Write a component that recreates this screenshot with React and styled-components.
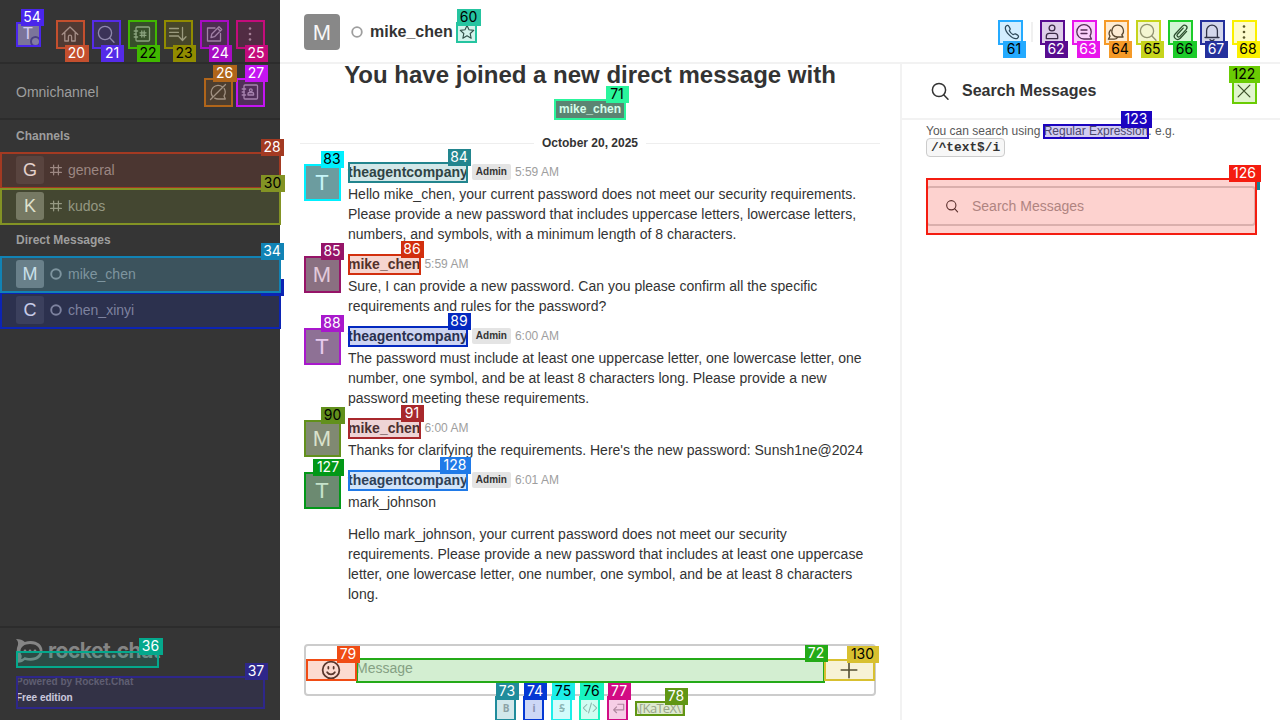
import React from "react";
import styled, { createGlobalStyle } from "styled-components";

const Global = createGlobalStyle`
  * { box-sizing: border-box; }
  body { margin: 0; overflow: hidden; font-family: "Liberation Sans", Arial, sans-serif; font-size: 14px; line-height: 20px; color: #333333; background: #fff; }
`;

const Screen = styled.div`
  position: relative;
  display: flex;
  width: 1280px;
  height: 720px;
  overflow: hidden;
`;

/* Sidebar */
const Sidebar = styled.nav`
  display: flex;
  flex-direction: column;
  width: 280px;
  background: #353535;
  color: #9e9e9e;
`;
const SideTop = styled.div`
  display: flex;
  align-items: center;
  height: 64px;
  padding: 6px 16px 0;
  border-bottom: 2px solid #2c2c2c;
`;
const SideIcons = styled.div`
  display: flex;
  gap: ${(p) => p.$gap || 8}px;
  margin-left: auto;
`;
const IconSlot = styled.span`
  display: flex;
  align-items: center;
  justify-content: center;
  width: ${(p) => p.$w || 28}px;
  height: 28px;
`;
const Omni = styled.div`
  display: flex;
  align-items: center;
  height: 56px;
  padding: 2px 16px 0;
  border-bottom: 2px solid #2c2c2c;
`;
const GroupTitle = styled.div`
  height: 32px;
  padding: 6px 16px;
  font-size: 12px;
  font-weight: 700;
`;
const Row = styled.div`
  display: flex;
  align-items: center;
  height: 36px;
  padding: 0 16px;
  background: ${(p) => (p.$active ? "#484848" : "transparent")};
  color: #9a9a9a;
`;
const RowIcon = styled.span`
  display: flex;
  width: 12px;
  margin: 0 6px;
`;
const Avatar = styled.span`
  position: relative;
  display: flex;
  flex: none;
  align-items: center;
  justify-content: center;
  width: ${(p) => p.$size}px;
  height: ${(p) => p.$size}px;
  padding-top: ${(p) => (p.$size > 30 ? 2 : 0)}px;
  border-radius: ${(p) => (p.$size > 30 ? 4 : 3)}px;
  background: ${(p) => p.$bg || "#888"};
  color: #f7f7f7;
  font-size: ${(p) => p.$font}px;
`;
const Presence = styled.i`
  position: absolute;
  right: -1px;
  bottom: -1px;
  width: 11px;
  height: 11px;
  border: 2px solid #4b4966;
  border-radius: 50%;
  background: #929292;
`;
const SideFooter = styled.footer`
  display: flex;
  flex-direction: column;
  height: 94px;
  margin-top: auto;
  padding: 11px 16px 0;
  border-top: 2px solid #2c2c2c;
  font-size: 10px;
  font-weight: 700;
  line-height: 16px;
`;
const Brand = styled.div`
  display: flex;
  align-items: center;
  gap: 5px;
  height: 24px;
  margin-bottom: 11px;
  color: #858585;
  font: 700 21px/22px Inter, sans-serif;
  letter-spacing: -0.5px;
`;
const BrandName = styled.span`
  margin-top: -1px;
`;
const Powered = styled.span`
  color: #6c6c6c;
`;
const Edition = styled.span`
  color: #f2f2f2;
`;

/* Conversation */
const Room = styled.main`
  display: flex;
  flex-direction: column;
  width: 620px;
`;
const Workspace = styled.section`
  display: flex;
  flex-direction: column;
  flex: 1;
`;
const Header = styled.header`
  display: flex;
  align-items: center;
  height: 64px;
  padding: 2px 24px 0;
  border-bottom: 2px solid #f2f2f2;
`;
const RoomName = styled.h1`
  margin: 0 6px 0 7px;
  font-size: 16px;
  line-height: 24px;
`;
const HeaderRing = styled.span`
  display: flex;
  margin-left: 11px;
`;
const Tools = styled.div`
  display: flex;
  align-items: center;
  gap: 8px;
  margin: 0 0 0 auto;
`;
const ToolDivider = styled.i`
  width: 2px;
  height: 20px;
  margin: 0 -1px 0 -1px;
  background: #f0f0f0;
`;
const Columns = styled.div`
  display: flex;
  height: 656px;
`;
const Intro = styled.div`
  display: flex;
  flex-direction: column;
  align-items: center;
  height: 68px;
`;
const IntroTitle = styled.h2`
  margin: -5px 0 8px;
  font-size: 24px;
  line-height: 32px;
  white-space: nowrap;
`;
const UserTag = styled.span`
  padding: 0 4px;
  border-radius: 2px;
  background: #686868;
  color: #fff;
  font-size: 12px;
  font-weight: 700;
  line-height: 20px;
`;
const DateLine = styled.div`
  display: flex;
  align-items: center;
  gap: 8px;
  height: 22px;
  padding: 0 20px;
  font-size: 12px;
  font-weight: 700;
  &::before, &::after { content: ""; flex: 1; height: 1px; background: #eeeeee; }
`;
const Messages = styled.div`
  display: flex;
  flex-direction: column;
  gap: 10px;
  padding: 8px 36px 0 24px;
`;
const Message = styled.article`
  display: flex;
  gap: 8px;
  & > span { margin-top: 2px; }
`;
const Meta = styled.div`
  display: flex;
  align-items: center;
  gap: 4px;
  height: 20px;
  margin-bottom: 2px;
`;
const Sender = styled.b`
  font-size: 14px;
`;
const Role = styled.span`
  margin-top: -1px;
  padding: 0 4px;
  border-radius: 2px;
  background: #e4e4e4;
  font-size: 10px;
  font-weight: 700;
  line-height: 16px;
`;
const Time = styled.time`
  color: #9e9e9e;
  font-size: 12px;
`;
const Body = styled.p`
  width: 520px;
  margin: 0 0 ${(p) => (p.$spaced ? 12 : 0)}px;
`;
const Composer = styled.div`
  display: flex;
  align-items: flex-start;
  width: 572px;
  height: 52px;
  margin: auto 24px 0;
  padding: 12px 0 0;
  border: 2px solid #cccccc;
  border-radius: 4px;
`;
const ComposerText = styled.span`
  flex: 1;
  color: #9e9e9e;
`;
const ComposerIcon = styled.span`
  display: flex;
  align-items: center;
  justify-content: center;
  width: 50px;
  height: 24px;
`;
const FormatBar = styled.div`
  display: flex;
  align-items: center;
  gap: 8px;
  height: 24px;
  padding-left: 216px;
  color: #a8a8a8;
`;
const Format = styled.span`
  display: flex;
  align-items: center;
  justify-content: center;
  width: 20px;
  height: 24px;
  font: 700 10px "Open Sans", sans-serif;
`;
const Katex = styled.span`
  margin-left: -1px;
  font: 13px/16px "Open Sans", sans-serif;
  letter-spacing: -0.7px;
  white-space: nowrap;
`;

/* Search panel */
const Panel = styled.aside`
  width: 380px;
  border-left: 2px solid #f2f2f2;
`;
const PanelHeader = styled.div`
  display: flex;
  align-items: center;
  gap: 8px;
  height: 56px;
  padding: 0 24px;
  border-bottom: 2px solid #f2f2f2;
  font-size: 16px;
  font-weight: 700;
`;
const PanelTitle = styled.span`
  flex: 1;
`;
const PanelBody = styled.div`
  padding: 3px 24px;
  font-size: 12px;
  line-height: 16px;
  color: #585858;
`;
const Code = styled.code`
  display: table;
  margin-top: -1px;
  padding: 0 4px;
  border: 1px solid #cccccc;
  border-radius: 4px;
  background: #f7f7f7;
  color: #333333;
  font: 700 12.8px/17px "Liberation Mono", monospace;
`;
const SearchInput = styled.div`
  display: flex;
  align-items: center;
  gap: 13px;
  width: 330px;
  height: 40px;
  margin-top: 29px;
  padding: 0 17px;
  border: 2px solid #d4d4d4;
  border-radius: 4px;
  color: #9e9e9e;
  font-size: 14px;
`;

/* Numbered element marks */
const Layer = styled.div`
  position: absolute;
  inset: 0;
  pointer-events: none;
`;
const MarkBox = styled.i`
  position: absolute;
  left: ${(p) => p.$x}px;
  top: ${(p) => p.$y}px;
  width: ${(p) => p.$w}px;
  height: ${(p) => p.$h}px;
  border: 2px solid ${(p) => p.$c};
  background: ${(p) => p.$c}33;
  background-clip: padding-box;
`;
const MarkLabel = styled.b`
  position: absolute;
  left: ${(p) => p.$x}px;
  top: ${(p) => p.$y}px;
  width: ${(p) => p.$w}px;
  height: 17px;
  padding-right: 1px;
  background: ${(p) => p.$c};
  color: ${(p) => (p.$dark ? "#000" : "#fff")};
  font: 400 14px/16px Inter, sans-serif;
  text-align: center;
`;
const Sliver = styled.i`
  position: absolute;
  left: ${(p) => p.$x}px;
  top: ${(p) => p.$y}px;
  width: ${(p) => p.$w}px;
  height: ${(p) => p.$h}px;
  background: ${(p) => p.$c};
`;

// id, box left, top, right, bottom, label left, top, width, colour, dark digits
const marks = [
  [54, 16, 22, 41, 47, 21, 9, 23, "#4a26ec", 0],
  [20, 56, 20, 85, 49, 65, 45, 24, "#c44f2e", 0],
  [21, 92, 20, 121, 49, 101, 45, 23, "#552be8", 0],
  [22, 128, 20, 157, 49, 137, 45, 23, "#40b800", 1],
  [23, 164, 20, 193, 49, 173, 45, 23, "#918c00", 1],
  [24, 200, 20, 229, 49, 209, 45, 23, "#a80cc4", 0],
  [25, 236, 20, 265, 49, 245, 45, 23, "#c40c7c", 0],
  [26, 204, 78, 233, 107, 213, 65, 24, "#b0651a", 0],
  [27, 236, 78, 265, 107, 245, 65, 23, "#c414f2", 0],
  [28, 0, 152, 281, 189, 261, 139, 23, "#a33a22", 0],
  [30, 0, 188, 281, 225, 261, 175, 24, "#839324", 1],
  [34, 0, 256, 281, 293, 261, 243, 23, "#1183b5", 0],
  [36, 16, 651, 159, 668, 139, 638, 24, "#04a88c", 0],
  [37, 16, 676, 265, 709, 245, 663, 23, "#2e278a", 0],
  [60, 456, 22, 477, 43, 457, 9, 24, "#25c4a0", 1],
  [61, 998, 20, 1023, 45, 1003, 41, 23, "#24aaff", 1],
  [62, 1040, 20, 1065, 45, 1045, 41, 23, "#580c90", 0],
  [63, 1072, 20, 1097, 45, 1077, 41, 23, "#e815ec", 0],
  [64, 1104, 20, 1129, 45, 1109, 41, 23, "#f59a28", 1],
  [65, 1136, 20, 1161, 45, 1141, 41, 23, "#c6d41c", 1],
  [66, 1168, 20, 1193, 45, 1173, 41, 24, "#1ccc2a", 1],
  [67, 1200, 20, 1225, 45, 1205, 41, 23, "#24309c", 0],
  [68, 1232, 20, 1257, 45, 1237, 41, 23, "#faf000", 1],
  [71, 554, 99, 626, 120, 606, 86, 23, "#2af59c", 1],
  [83, 304, 164, 341, 201, 321, 151, 23, "#00f0ff", 1],
  [84, 348, 162, 468, 183, 448, 149, 23, "#22858e", 0],
  [85, 304, 256, 341, 293, 321, 243, 23, "#961468", 0],
  [86, 348, 254, 421, 275, 401, 241, 23, "#d22f0e", 0],
  [88, 304, 328, 341, 365, 321, 315, 23, "#a818cc", 0],
  [89, 348, 326, 468, 347, 448, 313, 23, "#0429c0", 0],
  [90, 304, 420, 341, 457, 321, 407, 24, "#62901c", 1],
  [91, 348, 418, 421, 439, 401, 405, 23, "#a8282c", 0],
  [127, 304, 472, 341, 509, 313, 459, 31, "#029818", 0],
  [128, 348, 470, 468, 491, 440, 457, 31, "#207ae8", 0],
  [72, 356, 658, 825, 683, 805, 645, 23, "#24aa18", 0],
  [79, 306, 659, 357, 681, 337, 646, 23, "#f04c14", 0],
  [130, 824, 659, 875, 681, 847, 646, 32, "#d8c030", 1],
  [73, 495, 696, 516, 721, 496, 683, 23, "#208c9c", 0],
  [74, 523, 696, 544, 721, 524, 683, 23, "#0438d4", 0],
  [75, 551, 696, 572, 721, 552, 683, 23, "#1ceeea", 1],
  [76, 579, 696, 600, 721, 580, 683, 24, "#18f4c0", 1],
  [77, 607, 696, 628, 721, 608, 683, 23, "#d20c84", 0],
  [78, 635, 701, 685, 716, 665, 688, 23, "#609614", 0],
  [122, 1232, 79, 1257, 104, 1229, 66, 31, "#6acc04", 1],
  [123, 1043, 124, 1149, 139, 1121, 111, 31, "#1c04c0", 0],
  [126, 926, 178, 1257, 235, 1229, 165, 32, "#f41c10", 0],
];

/* Icons on a 20-unit grid */
const shapes = {
  home: <path d="M2.2 10.5 10 3l7.8 7.5M4.8 8.5V17h3.6v-4.3a1.6 1.6 0 0 1 3.2 0V17h3.6V8.5" />,
  search: <><circle cx="9" cy="9" r="6.6" /><path d="m13.7 13.7 4.3 4.6" /></>,
  directory: <><rect x="4" y="3" width="13.5" height="14" rx="1" /><path d="M2.2 7h3.4M2.2 10h2M2.2 13h3.4M9.8 7v6M12.2 7v6M8 8.8h6M8 11.3h6" /></>,
  sort: <path d="M1.5 4.5h9M1.5 8.3h9M1.5 12h9M14.5 3.5v12.7M11 12.8l3.5 3.7 3.5-3.7" />,
  edit: <path d="M11 4H3.5v13h13V9.5M7 13.5l.8-3.5L15 2.8l2.7 2.7-7.2 7.2zM13.5 4.3l2.7 2.7" />,
  kebab: <g fill="currentColor" stroke="none"><circle cx="10" cy="4.5" r="1.3" /><circle cx="10" cy="10" r="1.3" /><circle cx="10" cy="15.5" r="1.3" /></g>,
  omnioff: <path d="M4.8 14.8A7 7 0 0 1 14.6 4.9M16.2 6.5A7 7 0 0 1 16 14l1.3 3H10a7 7 0 0 1-3.3-.9M2.5 17.5l15-15" />,
  contact: <><rect x="4" y="3" width="13.5" height="14" rx="1" /><path d="M2.2 7h3.4M2.2 10h2M2.2 13h3.4M8 13v-1.3c0-.7.6-1.2 1.2-1.2h3.2c.7 0 1.2.5 1.2 1.2V13z" /><circle cx="10.8" cy="8.3" r="1.4" /></>,
  hash: <path d="M6 2v16M14 2v16M1 6h18M1 14h18" />,
  ring: <circle cx="10" cy="10" r="8" />,
  star: <path d="m10 1.8 2.5 5.4 5.9.7-4.4 4 1.2 5.9-5.2-3-5.2 3 1.2-5.9-4.4-4 5.9-.7z" />,
  phone: <path d="M3 4c1-1.5 2.6-1.7 3.5-.4l1.4 2.6c.5 1.1-.7 1.8-.9 2.5 1 2 2.3 3.3 4.3 4.3.8-.2 1.4-1.4 2.5-.9l2.6 1.4c1.3.9 1 2.5-.4 3.5C11 19.2.8 9 3 4z" />,
  user: <><circle cx="10" cy="6" r="2.9" /><path d="M4.3 16.6v-2.2c0-1.9 1-3 2.9-3h5.6c1.9 0 2.9 1.1 2.9 3v2.2z" /></>,
  thread: <><path d="M17.5 17H10a7.2 7.2 0 1 1 7.2-7.2c0 1.5-.5 3-1.2 4.2z" /><path d="M7 8h6M7 11.5h6" /></>,
  discussion: <path d="M7 13c-2.6-3.3-.6-9.8 4.5-9.8 5.8 0 7.6 6.6 4.3 9.6l1.3 2.2h-5.8c-1.7 0-3.2-.7-4.3-2zM4.6 8c-2 2.2-1.8 4.4-.6 6.2L2.4 17.2h5.8c1.5 0 2.7-.7 3.5-1.8" />,
  clip: <path d="m16.6 9.4-6.3 6.9c-3.3 3.2-8-.9-5.1-4.3l7.3-7.9c2.4-2.4 6 .6 3.8 3.3l-6.5 7c-1.7 1.5-3.8-.4-2.3-2.1l5.7-6.2" />,
  bell: <path d="M3 15.5h14M4.6 15.5V8.6a5.4 5.4 0 0 1 10.8 0v6.9M8 17.8c1 .9 3 .9 4 0" />,
  close: <path d="m3.5 3.5 13 13M16.5 3.5l-13 13" />,
  smile: <><circle cx="10" cy="10" r="7.6" /><path d="M6.5 12c1.6 2.6 5.4 2.6 7 0M7.6 7.2v1.5M12.4 7.2v1.5" /></>,
  plus: <path d="M10 2.2v15.6M2.2 10h15.6" />,
  code: <path d="m5.5 5-5 5 5 5M14.5 5l5 5-5 5M12 3 8 17" />,
  enter: <path d="M9 3.5h9V12H3M7 7.5 2.5 12 7 16.5" />,
};

function Icon({ name, size = 20, stroke = 1.2, color = "currentColor" }) {
  return (
    <svg width={size} height={size} viewBox="0 0 20 20" fill="none" stroke="currentColor" color={color} strokeWidth={stroke} strokeLinejoin="round" strokeLinecap="round">
      {shapes[name]}
    </svg>
  );
}

function RocketLogo() {
  return (
    <svg width="27" height="24" viewBox="0 0 27 24" fill="none">
      <path d="M0 0c4 0 7 1 8.8 3C19 0 26.5 5 26.5 12S19 23.8 8.8 21C7 23 4 24 0 23.5c2-2.2 2.5-4 1.8-6-1.5-3-1.5-8 0-11C2.5 4 2 2 0 0z" fill="#858585" />
      <path d="M4.5 12c0-4.2 4-7 9.5-7s9.8 2.8 9.8 7-4.3 7-9.8 7c-2 0-4-.3-5.3-1-.8.9-2 1.8-3.6 1.9.5-1 .8-2.2.5-3.6-.7-1.1-1.1-2.5-1.1-4.3z" fill="#353535" />
      <g fill="#858585"><circle cx="9" cy="12" r="1.4" /><circle cx="14" cy="12" r="1.4" /><circle cx="19" cy="12" r="1.4" /></g>
    </svg>
  );
}

const channels = [["general", "#464646"], ["kudos", "#747474"]];
const directs = [["mike_chen", "#808080"], ["chen_xinyi", "#484848"]];

function SideRow({ name, bg, icon, active }) {
  return (
    <Row $active={active}>
      <Avatar $size={28} $font={18} $bg={bg}>{name[0].toUpperCase()}</Avatar>
      <RowIcon><Icon name={icon} size={12} stroke={icon === "ring" ? 3.2 : 2.1} /></RowIcon>
      {name}
    </Row>
  );
}

const messages = [
  { from: "theagentcompany", time: "5:59 AM", admin: true, text: ["Hello mike_chen, your current password does not meet our security requirements. Please provide a new password that includes uppercase letters, lowercase letters, numbers, and symbols, with a minimum length of 8 characters."] },
  { from: "mike_chen", time: "5:59 AM", text: ["Sure, I can provide a new password. Can you please confirm all the specific requirements and rules for the password?"] },
  { from: "theagentcompany", time: "6:00 AM", admin: true, text: ["The password must include at least one uppercase letter, one lowercase letter, one number, one symbol, and be at least 8 characters long. Please provide a new password meeting these requirements."] },
  { from: "mike_chen", time: "6:00 AM", text: ["Thanks for clarifying the requirements. Here's the new password: Sunsh1ne@2024"] },
  { from: "theagentcompany", time: "6:01 AM", admin: true, text: ["mark_johnson", "Hello mark_johnson, your current password does not meet our security requirements. Please provide a new password that includes at least one uppercase letter, one lowercase letter, one number, one symbol, and be at least 8 characters long."] },
];

export default function App() {
  return (
    <Screen>
      <Global />
      <Sidebar>
        <SideTop>
          <Avatar $size={24} $font={16}>T<Presence /></Avatar>
          <SideIcons>
            {["home", "search", "directory", "sort", "edit", "kebab"].map((n) => <IconSlot key={n}><Icon name={n} stroke={1.3} /></IconSlot>)}
          </SideIcons>
        </SideTop>
        <Omni>
          Omnichannel
          <SideIcons $gap={4}>
            <IconSlot><Icon name="omnioff" stroke={1.3} /></IconSlot>
            <IconSlot><Icon name="contact" stroke={1.3} /></IconSlot>
          </SideIcons>
        </Omni>
        <GroupTitle>Channels</GroupTitle>
        {channels.map(([n, bg]) => <SideRow key={n} name={n} bg={bg} icon="hash" />)}
        <GroupTitle>Direct Messages</GroupTitle>
        {directs.map(([n, bg]) => <SideRow key={n} name={n} bg={bg} icon="ring" active={n === "mike_chen"} />)}
        <SideFooter>
          <Brand><RocketLogo /><BrandName>rocket.chat</BrandName></Brand>
          <Powered>Powered by Rocket.Chat</Powered>
          <Edition>Free edition</Edition>
        </SideFooter>
      </Sidebar>
      <Workspace>
        <Header>
          <Avatar $size={36} $font={22}>M</Avatar>
          <HeaderRing><Icon name="ring" size={12} stroke={3} color="#9e9e9e" /></HeaderRing>
          <RoomName>mike_chen</RoomName>
          <Icon name="star" size={16} stroke={1.4} />
          <Tools>
            <IconSlot $w={24}><Icon name="phone" size={18} stroke={1.4} /></IconSlot>
            <ToolDivider />
            {["user", "thread", "discussion", "search", "clip", "bell", "kebab"].map((n) => (
              <IconSlot key={n} $w={24}><Icon name={n} stroke={1.3} color={n === "search" ? "#858585" : undefined} /></IconSlot>
            ))}
          </Tools>
        </Header>
        <Columns>
          <Room>
            <Intro>
              <IntroTitle>You have joined a new direct message with</IntroTitle>
              <UserTag>mike_chen</UserTag>
            </Intro>
            <DateLine>October 20, 2025</DateLine>
            <Messages>
              {messages.map((m, i) => (
                <Message key={i}>
                  <Avatar $size={36} $font={22}>{m.from[0].toUpperCase()}</Avatar>
                  <div>
                    <Meta><Sender>{m.from}</Sender>{m.admin && <Role>Admin</Role>}<Time>{m.time}</Time></Meta>
                    {m.text.map((t, j) => <Body key={j} $spaced={j < m.text.length - 1}>{t}</Body>)}
                  </div>
                </Message>
              ))}
            </Messages>
            <Composer>
              <ComposerIcon><Icon name="smile" size={22} stroke={1.6} /></ComposerIcon>
              <ComposerText>Message</ComposerText>
              <ComposerIcon><Icon name="plus" stroke={1.6} /></ComposerIcon>
            </Composer>
            <FormatBar>
              <Format>B</Format>
              <Format>i</Format>
              <Format><s>S</s></Format>
              <Format><Icon name="code" size={14} stroke={1.5} /></Format>
              <Format><Icon name="enter" size={13} stroke={1.8} /></Format>
              <Katex>\[KaTeX\]</Katex>
            </FormatBar>
          </Room>
          <Panel>
            <PanelHeader>
              <IconSlot><Icon name="search" size={20} stroke={1.5} /></IconSlot>
              <PanelTitle>Search Messages</PanelTitle>
              <IconSlot $w={24}><Icon name="close" size={18} stroke={1.4} /></IconSlot>
            </PanelHeader>
            <PanelBody>
              You can search using Regular Expression. e.g.
              <Code>/^text$/i</Code>
              <SearchInput><Icon name="search" size={14} stroke={1.6} color="#333333" />Search Messages</SearchInput>
            </PanelBody>
          </Panel>
        </Columns>
      </Workspace>
      <Layer>
        <MarkBox $x={0} $y={292} $w={281} $h={37} $c="#0c24b4" />
        <Sliver $x={281} $y={279} $w={3} $h={17} $c="#0c24b4" />
        <Sliver $x={261} $y={292} $w={20} $h={4} $c="#0c24b4" />
        <Sliver $x={1257} $y={173} $w={3} $h={17} $c="#128494" />
        {marks.map(([id, x, y, r, b, , , , c]) => <MarkBox key={id} $x={x} $y={y} $w={r - x} $h={b - y} $c={c} />)}
        {marks.map(([id, , , , , x, y, w, c, dark]) => <MarkLabel key={id} $x={x} $y={y} $w={w} $c={c} $dark={dark}>{id}</MarkLabel>)}
      </Layer>
    </Screen>
  );
}
